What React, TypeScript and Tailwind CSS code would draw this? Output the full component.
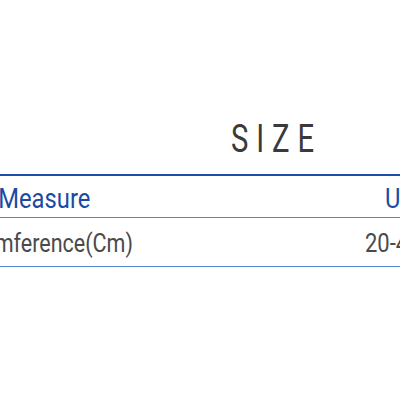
export default function App() {
  return (
    <div className="w-[400px] h-[400px] overflow-hidden bg-white font-['Roboto',sans-serif]">
      <div className="pt-[120px] pl-[231px] whitespace-nowrap">
        <span className="inline-block origin-left scale-x-[0.75] text-[39px] leading-[39px] font-normal tracking-[10.5px] text-[#3a3a3a]">
          SIZE
        </span>
      </div>
      <div className="mt-[15px] border-t-2 border-[#1d4ea6]">
        <div className="flex h-[42px] pt-[10px] border-b border-[#5582cc] whitespace-nowrap">
          <div className="-ml-[61px] w-[210px] shrink-0 text-center">
            <span className="inline-block scale-x-[0.88] text-[27px] leading-[27px] text-[#1a4aa3]">Measure</span>
          </div>
          <div className="pl-[236px] shrink-0">
            <span className="inline-block origin-left scale-x-[0.88] text-[27px] leading-[27px] text-[#1a4aa3]">Unit</span>
          </div>
        </div>
        <div className="flex h-[49px] pt-[13px] border-b border-[#5582cc] whitespace-nowrap">
          <div className="-ml-[70px] w-[210px] shrink-0 text-center">
            <span className="inline-block scale-x-[0.86] text-[25px] leading-[25px] text-[#4a4a4a]">Circumference(Cm)</span>
          </div>
          <div className="pl-[225px] shrink-0">
            <span className="inline-block origin-left scale-x-[0.88] text-[25px] leading-[25px] text-[#4a4a4a]">20-40</span>
          </div>
        </div>
      </div>
    </div>
  );
}
